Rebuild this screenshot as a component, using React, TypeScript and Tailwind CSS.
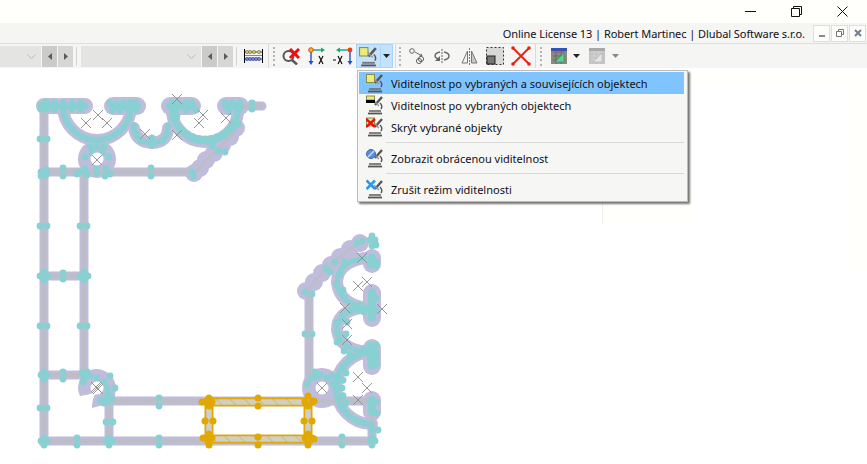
import React from 'react';

type Pt = [number, number];

const PURPLE = '#c0bcdc';
const CYAN = '#88d0d2';
const GOLD = '#e0a800';

// dots spread along a circle arc, angles in degrees
const arc = (cx: number, cy: number, r: number, a0: number, a1: number, n: number): Pt[] =>
  Array.from({ length: n }, (_, i) => {
    const a = ((a0 + ((a1 - a0) * i) / (n - 1)) * Math.PI) / 180;
    return [cx + r * Math.cos(a), cy + r * Math.sin(a)] as Pt;
  });

const frameLines = [
  'M44 106V441H372',
  'M44 106H86',
  'M44 172H190',
  'M84 172V375',
  'M44 276H84',
  'M44 375H86',
  'M105 401H372',
  'M109 401V441',
  'M309 292V385',
  'M372 415V441',
  'M225 106H262',
];

const blocks = [
  { d: 'M44 106H57M62 106H85', w: 16 },
  { d: 'M113 106H137', w: 18 },
  { d: 'M170 106H192', w: 18 },
  { d: 'M226 106H240', w: 18 },
  { d: 'M372 293V318', w: 18 },
  { d: 'M372 348V366', w: 18 },
  { d: 'M372 400V412', w: 18 },
  { d: 'M372 258V264', w: 18 },
];

const cups = [
  'M63 106A34 34 0 0 0 97 140A34 34 0 0 0 131 106',
  'M134 128Q136 142 152 143Q168 142 168 128',
  'M172 106A33 33 0 0 0 205 142A33 33 0 0 0 238 106',
  'M365 258Q337 262 337 283Q340 305 368 308',
  'M360 308Q337 312 337 330Q340 350 368 352',
  'M372 352A36 36 0 0 0 372 424',
];

// diagonal bevels: purple beads with a thin grey core
const bevels: Pt[][] = [
  [[194, 173], [200, 168], [206, 160], [214, 153], [222, 145], [230, 137], [236, 128]],
  [[306, 291], [314, 282], [322, 273], [331, 265], [340, 257], [350, 249], [360, 243]],
];

const dots: Pt[] = [
  [41, 105], [46, 102], [46, 109], [41, 109], [54, 103], [54, 109], [63, 103], [63, 109], [72, 103], [72, 109], [81, 103], [81, 109], [64, 106], [85, 106],
  [110, 103], [116, 104], [123, 103], [130, 103], [136, 103], [112, 110], [120, 110], [129, 110], [136, 110],
  [172, 103], [178, 103], [186, 103], [192, 103], [176, 110], [186, 110], [196, 110], [177, 116],
  [225, 103], [232, 103], [240, 103], [229, 110], [238, 110], [252, 103], [252, 109],
  ...arc(97, 106, 34, 20, 165, 16),
  ...arc(205, 106, 33, 15, 165, 15),
  [134, 126], [136, 134], [141, 141], [152, 138], [152, 145], [162, 141], [167, 134], [168, 126], [172, 118],
  [90, 147], [97, 147], [104, 147], [92, 153], [102, 153], [85, 157], [109, 157],
  [40, 139], [47, 139], [40, 226], [47, 226], [80, 226], [87, 226], [40, 326], [47, 326], [80, 326], [87, 326],
  [41, 172], [46, 170], [46, 175], [41, 176], [63, 168], [63, 176], [151, 168], [151, 176], [80, 172], [85, 169], [87, 175], [77, 174], [97, 173], [97, 166], [106, 169], [110, 174], [105, 176],
  [192, 172], [193, 176], [212, 146], [218, 151], [225, 152], [233, 128], [238, 124],
  [40, 276], [48, 276], [44, 272], [44, 280], [63, 273], [63, 279], [80, 276], [88, 276], [84, 272], [84, 280],
  [41, 375], [47, 375], [44, 372], [44, 379], [63, 372], [63, 379], [82, 373], [87, 372], [84, 378], [90, 376], [83, 382], [97, 378], [104, 382], [110, 376], [107, 388], [115, 388],
  [100, 400], [106, 398], [110, 401], [104, 403], [112, 398], [108, 394],
  [40, 408], [47, 408], [41, 441], [47, 441], [44, 438], [44, 445], [77, 438], [77, 445], [106, 422], [113, 422], [106, 441], [112, 441], [109, 438], [109, 445],
  [159, 398], [159, 406], [159, 438], [159, 445], [342, 437], [342, 445], [372, 430], [378, 430], [370, 441], [375, 441], [372, 438], [372, 445],
  ...arc(372, 388, 36, 95, 265, 22),
  ...arc(372, 388, 30, 150, 210, 5),
  [370, 345], [376, 345], [370, 352], [376, 352], [370, 358], [376, 358], [371, 364], [376, 364], [370, 402], [376, 402], [372, 408], [377, 413],
  [305, 292], [312, 294], [305, 334], [312, 334], [326, 268], [335, 262], [344, 262], [330, 272], [340, 274],
  [357, 243], [362, 241], [370, 240], [375, 240], [372, 236], [372, 246], [376, 245], [372, 257], [376, 262], [370, 265], [376, 266],
  [337, 285], [343, 290], [345, 298], [350, 303], [360, 305], [367, 308], [372, 292], [376, 298], [372, 303], [376, 310], [372, 315], [364, 312], [358, 310], [351, 311], [342, 318], [337, 323], [347, 322], [337, 332], [346, 334], [337, 342], [344, 351], [350, 355], [359, 354], [364, 349],
  [327, 378], [320, 375], [316, 377], [311, 378], [307, 384], [315, 372], [333, 384], [338, 380], [332, 376],
];

const crosses: Pt[] = [
  [97, 160], [98, 115], [86, 123], [107, 123], [203, 115], [199, 123], [226, 118], [145, 134], [177, 135],
  [358, 286], [367, 282], [382, 309], [345, 308], [347, 324], [347, 340], [362, 258], [358, 377], [367, 388], [358, 400], [322, 388], [177, 99],
  [97, 388], [96, 387], [98, 389],
];

const goldDots: Pt[] = [
  [258, 398], [258, 406], [258, 437], [258, 445], [205, 421], [213, 421], [304, 421], [312, 421], [209, 398], [209, 445], [308, 445], [308, 396],
  [206, 402], [212, 402], [209, 406], [206, 438], [212, 438], [209, 434], [209, 441], [305, 402], [312, 402], [308, 406], [305, 438], [312, 438], [308, 434], [308, 441], [202, 402], [203, 438], [314, 401], [314, 439],
];

const Model = () => (
  <svg viewBox="0 68 867 396" className="relative block h-full w-full">
    <defs>
      <pattern id="hatch" width="10" height="10" patternUnits="userSpaceOnUse" patternTransform="rotate(-45)">
        <rect width="10" height="10" fill="#cfcfc8" />
        <line x1="0" y1="0" x2="0" y2="10" stroke={GOLD} strokeWidth="1" />
      </pattern>
    </defs>
    <circle cx="97" cy="159" r="19" fill={PURPLE} />
    <path d="M78 388A19 19 0 0 1 97 369A20 20 0 0 1 116 388Q116 401 104 405L92 408Q92 397 97 392L86 395L80 396Q78 392 78 388Z" fill={PURPLE} />
    <circle cx="322" cy="388" r="20" fill={PURPLE} />
    {frameLines.map((d) => (
      <path key={d} d={d} fill="none" stroke={PURPLE} strokeWidth="9" strokeLinecap="round" />
    ))}
    {blocks.map((b) => (
      <path key={b.d} d={b.d} fill="none" stroke={PURPLE} strokeWidth={b.w} strokeLinecap="round" />
    ))}
    {cups.map((d) => (
      <path key={d} d={d} fill="none" stroke={PURPLE} strokeWidth="12" strokeLinecap="round" />
    ))}
    {bevels.map((line) =>
      line.map(([x, y]) => <circle key={`${x}-${y}`} cx={x} cy={y} r="9" fill={PURPLE} />),
    )}
    {bevels.map((line, i) => (
      <path key={i} d={`M${line.map(([x, y]) => `${x} ${y}`).join('L')}`} fill="none" stroke="#bdbdc8" strokeWidth="3" />
    ))}
    {frameLines.map((d) => (
      <path key={d} d={d} fill="none" stroke="#bdbdc8" strokeWidth="5" />
    ))}
    {blocks.map((b) => (
      <path key={b.d} d={b.d} fill="none" stroke={CYAN} strokeWidth={b.w - 10} strokeLinecap="round" />
    ))}
    {cups.map((d) => (
      <path key={d} d={d} fill="none" stroke={CYAN} strokeWidth="5" strokeLinecap="round" />
    ))}
    {dots.map(([x, y], i) => (
      <circle key={i} cx={x} cy={y} r="3.4" fill={CYAN} />
    ))}
    <circle cx="97" cy="159" r="6.5" fill="#fff" />
    <circle cx="97" cy="388" r="6.5" fill="#fff" />
    <circle cx="322" cy="388" r="6.5" fill="#fff" />
    <rect x="209" y="402" width="99" height="37" fill="none" stroke={GOLD} strokeWidth="9" />
    <rect x="209" y="402" width="99" height="37" fill="none" stroke="url(#hatch)" strokeWidth="5.5" />
    {goldDots.map(([x, y], i) => (
      <circle key={i} cx={x} cy={y} r="3.5" fill={GOLD} />
    ))}
    {crosses.map(([x, y], i) => (
      <path key={i} d={`M${x - 5} ${y - 5}L${x + 5} ${y + 5}M${x + 5} ${y - 5}L${x - 5} ${y + 5}`} stroke="#8c8c8c" strokeWidth="0.9" fill="none" />
    ))}
  </svg>
);

const Microscope = () => (
  <g fill="none" stroke="#555" strokeWidth="1.4">
    <path d="M16 2L9 10" strokeWidth="2.4" />
    <path d="M8 6L13 11" stroke="#999" />
    <path d="M14 8Q17 11 15 14" />
    <path d="M3 16H15" strokeWidth="1.8" stroke="#777" />
    <path d="M2 18.5H16" strokeWidth="1.8" />
  </g>
);

type ScopeKind = 'both' | 'selected' | 'hide' | 'invert' | 'cancel';

const ScopeIcon = ({ kind, size = 18 }: { kind: ScopeKind; size?: number }) => (
  <svg width={size} height={size + 2} viewBox="0 0 18 20">
    <Microscope />
    {kind === 'both' && <rect x="0.5" y="1.5" width="8" height="8" fill="#ecec78" stroke="#8a8a50" />}
    {kind === 'selected' && (
      <g>
        <rect x="0.5" y="1" width="8" height="4" fill="#ecec78" stroke="#8a8a50" />
        <rect x="0" y="5" width="9" height="3" fill="#000" />
      </g>
    )}
    {kind === 'hide' && (
      <g>
        <rect x="0.5" y="1" width="8" height="8" fill="#ecec78" stroke="#8a8a50" />
        <path d="M0 2L9 10M9 2L0 10" stroke="#e81010" strokeWidth="2.4" />
      </g>
    )}
    {kind === 'invert' && (
      <g>
        <circle cx="5" cy="6" r="4.5" fill="#5a8ee0" stroke="#3c68b8" />
        <path d="M2 9L8 3" stroke="#cfe0f8" strokeWidth="1.4" />
      </g>
    )}
    {kind === 'cancel' && <path d="M0.5 1.5L9 10M9 1.5L0.5 10" stroke="#2a9ae8" strokeWidth="2.6" />}
  </svg>
);

const Caret = ({ color = '#222' }: { color?: string }) => (
  <svg width="7" height="4" viewBox="0 0 7 4">
    <path d="M0 0H7L3.5 4Z" fill={color} />
  </svg>
);

const Chevron = () => (
  <svg width="9" height="5" viewBox="0 0 9 5">
    <path d="M0.5 0.5L4.5 4.5L8.5 0.5" fill="none" stroke="#b8b8b6" />
  </svg>
);

const ArrowBtn = ({ dir, dark = false }: { dir: 'l' | 'r'; dark?: boolean }) => (
  <div className={`flex h-[21px] w-[15px] items-center justify-center ${dark ? 'bg-[#cbcbc9]' : 'bg-[#d6d6d4]'}`}>
    <svg width="4" height="7" viewBox="0 0 4 7">
      <path d={dir === 'l' ? 'M4 0V7L0 3.5Z' : 'M0 0V7L4 3.5Z'} fill="#5a5a5a" />
    </svg>
  </div>
);

const Grip = () => (
  <div className="flex h-[21px] w-[3px] flex-col justify-between py-[1px]">
    {[0, 1, 2, 3, 4].map((i) => (
      <div key={i} className="h-[2px] w-[2px] bg-[#b4b4b2]" />
    ))}
  </div>
);

const Sep = () => <div className="h-[19px] w-px bg-[#d4d4d2]" />;

const Abacus = () => (
  <svg width="19" height="14" viewBox="0 0 19 14">
    <path d="M0.5 0V14M18.5 0V14" stroke="#000" />
    <path d="M1 3H18M1 10H18" stroke="#444" />
    <path d="M1 6.5H18" stroke="#888" />
    {[3, 6, 10, 15].map((x) => (
      <circle key={x} cx={x} cy="3" r="1.7" fill="#c8c070" stroke="#6a6430" strokeWidth="0.5" />
    ))}
    {[3, 6, 9, 12, 15].map((x) => (
      <circle key={x} cx={x} cy="10" r="1.7" fill="#7080d8" stroke="#303888" strokeWidth="0.5" />
    ))}
  </svg>
);

const ZoomX = () => (
  <svg width="18" height="17" viewBox="0 0 18 17">
    <circle cx="6.5" cy="8" r="5" fill="none" stroke="#555" strokeWidth="2" />
    <path d="M10 12L15 16.5" stroke="#555" strokeWidth="2.4" />
    <path d="M8 1L17 10M17 1L8 10" stroke="#ee1010" strokeWidth="3" />
  </svg>
);

const AxisX = () => (
  <svg width="17" height="18" viewBox="0 0 17 18">
    <path d="M3 3H14" stroke="#10a878" strokeWidth="1.4" />
    <path d="M13 0.5L17 3L13 5.5Z" fill="#10a878" />
    <path d="M3 4V15" stroke="#2050d0" strokeWidth="1.4" />
    <path d="M0.5 14H5.5L3 18Z" fill="#2050d0" />
    <circle cx="3" cy="3" r="2.3" fill="#e8c020" stroke="#e84010" />
    <path d="M11 9L15 17M15 9L11 17" stroke="#111" strokeWidth="1.2" />
  </svg>
);

const AxisNegX = () => (
  <svg width="20" height="18" viewBox="0 0 20 18">
    <path d="M6 3H17" stroke="#10a878" strokeWidth="1.4" />
    <path d="M7 0.5L3 3L7 5.5Z" fill="#10a878" />
    <path d="M17 4V15" stroke="#2050d0" strokeWidth="1.4" />
    <path d="M14.5 14H19.5L17 18Z" fill="#2050d0" />
    <circle cx="17" cy="3" r="2.4" fill="#f04010" />
    <path d="M5 9L9 17M9 9L5 17M0 13H3" stroke="#111" strokeWidth="1.2" />
  </svg>
);

const Nodes = () => (
  <svg width="16" height="16" viewBox="0 0 16 16">
    <circle cx="3" cy="3" r="2.3" fill="none" stroke="#666" />
    <path d="M6 4L13 8M13 8L10.5 8M13 8L12 5.8" stroke="#666" fill="none" />
    <circle cx="12" cy="11" r="2.6" fill="none" stroke="#666" />
    <circle cx="10" cy="13" r="2.6" fill="none" stroke="#666" />
  </svg>
);

const Rotate = () => (
  <svg width="16" height="14" viewBox="0 0 16 14">
    <path d="M8 0V14" stroke="#666" strokeDasharray="2 1" />
    <path d="M6 3Q1 4 1 7Q1 9 5 10" fill="none" stroke="#666" strokeWidth="1.4" />
    <path d="M10 3Q15 4 15 7Q15 10 10 11" fill="none" stroke="#666" strokeWidth="1.4" />
    <path d="M6 7V12H1Z" fill="#666" />
  </svg>
);

const Mirror = () => (
  <svg width="17" height="17" viewBox="0 0 17 17">
    <path d="M8.5 0V17" stroke="#777" strokeDasharray="2 1" />
    <path d="M6.5 3V15H1Z" fill="#f4f4f2" stroke="#777" />
    <path d="M10.5 3V15H16Z" fill="#c8c8c8" stroke="#777" />
  </svg>
);

const DashSquare = () => (
  <svg width="18" height="18" viewBox="0 0 18 18">
    <rect x="0.5" y="0.5" width="17" height="17" fill="#d8d8d6" stroke="#333" strokeDasharray="2 2" />
    <rect x="1" y="9" width="8" height="8" fill="#777" stroke="#222" />
  </svg>
);

const RedCross = () => (
  <svg width="20" height="20" viewBox="0 0 20 20">
    <path d="M2 2L18 18M18 2L2 18" stroke="#e82010" strokeWidth="1.8" />
    {[[2, 2], [18, 2], [2, 18], [18, 18]].map(([x, y]) => (
      <circle key={x * 100 + y} cx={x} cy={y} r="1.8" fill="#e82010" />
    ))}
  </svg>
);

const TableIcon = ({ muted = false }: { muted?: boolean }) => (
  <svg width="16" height="16" viewBox="0 0 16 16">
    <rect width="16" height="16" fill={muted ? '#c4c4c4' : '#8a8a80'} />
    <rect width="16" height="3" fill={muted ? '#a8a8a8' : '#3850b8'} />
    <path d="M2 4H14M2 8H14M2 12H14M5 4V16M10 4V16" stroke={muted ? '#dcdcdc' : '#5a5a50'} strokeWidth="0.6" />
    <path d="M4 14L13 5V14Z" fill={muted ? '#e4e4e4' : '#50d890'} stroke={muted ? '#b0b0b0' : '#309060'} strokeWidth="0.6" />
  </svg>
);

const MdiBtn = ({ children }: { children: React.ReactNode }) => (
  <div className="flex h-[17px] w-[17px] items-center justify-center border border-[#dededc] bg-[#fdfdfb]">{children}</div>
);

const items: { kind: ScopeKind; label: string; active?: boolean; sepAfter?: boolean }[] = [
  { kind: 'both', label: 'Viditelnost po vybraných a souvisejících objektech', active: true },
  { kind: 'selected', label: 'Viditelnost po vybraných objektech' },
  { kind: 'hide', label: 'Skrýt vybrané objekty', sepAfter: true },
  { kind: 'invert', label: 'Zobrazit obrácenou viditelnost', sepAfter: true },
  { kind: 'cancel', label: 'Zrušit režim viditelnosti' },
];

const App: React.FC = () => {
  return (
    <div className="flex h-[464px] w-[867px] flex-col overflow-hidden bg-white font-['Noto_Sans',sans-serif] text-[11px] text-[#101018]">
      {/* Title bar */}
      <div className="flex h-[23px] items-center justify-end gap-[35px] bg-[#fffffc] pr-[19px]">
        <svg width="11" height="1" viewBox="0 0 11 1">
          <path d="M0 0.5H11" stroke="#111" />
        </svg>
        <svg width="11" height="11" viewBox="0 0 11 11">
          <path d="M0.5 2.5H8.5V10.5H0.5ZM2.5 2.5V0.5H10.5V8.5H8.5" fill="none" stroke="#111" />
        </svg>
        <svg width="11" height="11" viewBox="0 0 11 11">
          <path d="M0.5 0.5L10.5 10.5M10.5 0.5L0.5 10.5" stroke="#111" />
        </svg>
      </div>

      {/* Menu bar with licence info */}
      <div className="flex h-[21px] items-center justify-end border-b border-[#dededc] bg-[#f5f5f3] pr-[1px]">
        <span className="mr-[8px] leading-none tracking-[-0.07px]">Online License 13 | Robert Martinec | Dlubal Software s.r.o.</span>
        <div className="flex gap-[1px]">
          <MdiBtn>
            <div className="mt-[5px] h-[2px] w-[6px] bg-[#8a8a8a]" />
          </MdiBtn>
          <MdiBtn>
            <svg width="8" height="8" viewBox="0 0 8 8">
              <path d="M0.5 2.5H5.5V7.5H0.5ZM2.5 2.5V0.5H7.5V5.5H5.5" fill="none" stroke="#777" />
            </svg>
          </MdiBtn>
          <MdiBtn>
            <svg width="8" height="8" viewBox="0 0 8 8">
              <path d="M1 1L7 7M7 1L1 7" stroke="#6f7f8f" strokeWidth="2" />
            </svg>
          </MdiBtn>
        </div>
      </div>

      {/* Toolbar */}
      <div className="flex h-[24px] items-center bg-[#f5f5f3]">
        <div className="flex h-[21px] w-[41px] items-center justify-end bg-[#e4e4e2] pr-[5px]">
          <Chevron />
        </div>
        <div className="ml-px"><ArrowBtn dir="l" dark /></div>
        <div className="ml-px"><ArrowBtn dir="r" /></div>
        <div className="ml-[3px]"><Sep /></div>
        <div className="ml-[4px] flex h-[21px] w-[120px] items-center justify-end bg-[#e4e4e2] pr-[5px]">
          <Chevron />
        </div>
        <div className="ml-px"><ArrowBtn dir="l" dark /></div>
        <div className="ml-px"><ArrowBtn dir="r" /></div>
        <div className="ml-[3px]"><Sep /></div>
        <div className="ml-[7px]"><Abacus /></div>
        <div className="ml-[5px] h-[24px] w-px bg-[#dadad8]" />
        <div className="ml-[4px]"><Grip /></div>
        <div className="ml-[6px]"><ZoomX /></div>
        <div className="ml-[8px]"><AxisX /></div>
        <div className="ml-[8px]"><AxisNegX /></div>
        <div className="ml-[3px] flex h-[24px] w-[37px] items-center border border-[#a8d4f8] bg-[#c4e2fb]">
          <div className="flex w-[24px] justify-center border-r border-[#a8d4f8]">
            <ScopeIcon kind="both" size={19} />
          </div>
          <div className="flex flex-1 justify-center">
            <Caret />
          </div>
        </div>
        <div className="ml-[2px] h-[24px] w-px bg-[#dadad8]" />
        <div className="ml-[3px]"><Grip /></div>
        <div className="ml-[7px]"><Nodes /></div>
        <div className="ml-[9px]"><Rotate /></div>
        <div className="ml-[11px]"><Mirror /></div>
        <div className="ml-[8px]"><DashSquare /></div>
        <div className="ml-[7px]"><RedCross /></div>
        <div className="ml-[4px] h-[24px] w-px bg-[#dadad8]" />
        <div className="ml-[4px]"><Grip /></div>
        <div className="ml-[8px]"><TableIcon /></div>
        <div className="ml-[6px]"><Caret /></div>
        <div className="ml-[9px]"><TableIcon muted /></div>
        <div className="ml-[7px]"><Caret color="#888" /></div>
      </div>

      {/* Model canvas */}
      <div className="relative flex-1">
        {/* stale repaint patches left round the menu */}
        <div className="absolute left-[602px] top-[3px] h-[153px] w-[265px] border-l border-[#f2f2ea] bg-[#fffffb]" />
        <div className="absolute left-[692px] top-[19px] h-[137px] w-[156px] bg-white" />
        <div className="absolute left-[848px] top-[3px] h-[203px] w-[19px] bg-[#fffffb]" />
        <Model />
        {/* Dropdown menu */}
        <div className="absolute left-[357px] top-[2px] w-[331px] border border-[#bcbcba] bg-[#f6f6f4] py-[1px] pl-[1px] pr-[3px] shadow-[2px_2px_2px_rgba(0,0,0,0.55)]">
          {items.map((it) => (
            <div key={it.label}>
              <div className={`flex h-[22px] items-center ${it.active ? 'bg-[#80c4ff]' : ''}`}>
                <div className="flex w-[30px] justify-center pl-[1px]">
                  <ScopeIcon kind={it.kind} />
                </div>
                <span className="ml-[2px] pt-[1px] leading-none">{it.label}</span>
              </div>
              {it.sepAfter && (
                <div className="ml-[27px] flex h-[9px] items-center">
                  <div className="h-px w-full bg-[#d8d8d6]" />
                </div>
              )}
            </div>
          ))}
        </div>
      </div>
    </div>
  );
};

export default App;
